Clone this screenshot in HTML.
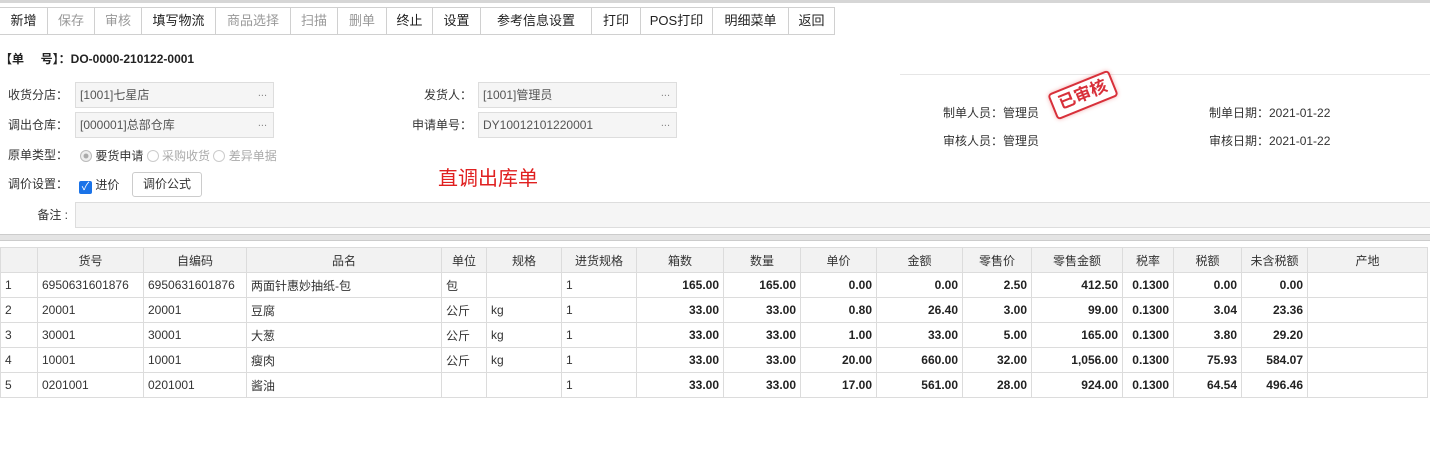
<!DOCTYPE html>
<html><head><meta charset="utf-8"><style>
*{box-sizing:border-box;margin:0;padding:0}
body{width:1430px;height:454px;background:#fff;font-family:"Liberation Sans","Noto Sans CJK SC",sans-serif;font-size:12px;color:#333;position:relative;overflow:hidden}
.a{position:absolute;white-space:nowrap}
.topline{position:absolute;left:0;top:0;width:1430px;height:3px;background:#d6d6d6}
.tb{position:absolute;left:0;top:7px;height:28px;display:flex;border:1px solid #d0d0d0;border-left:none}
.tb div{height:26px;line-height:26px;text-align:center;border-left:1px solid #d0d0d0;font-size:13px;color:#222}
.tb .d{color:#999}
.lbl{position:absolute;text-align:right;width:70px;line-height:26px}
.inp{position:absolute;height:26px;border:1px solid #ddd;background:#f5f5f5;line-height:24px;padding-left:4px;color:#555}
.inp span{position:absolute;right:6px;top:-2px;color:#888;font-size:11px}
table{position:absolute;left:0;top:247px;border-collapse:collapse;table-layout:fixed}
td,th{border:1px solid #dcdcdc;height:25px;padding:0 4px;white-space:nowrap;overflow:hidden;font-size:12px}
th{background:#f2f2f2;font-weight:normal;color:#333}
td.r{text-align:right;font-weight:bold;color:#222}
</style></head><body>
<div class="topline"></div>
<div class="tb">
<div style="width:47px;border-left:none">新增</div><div class="d" style="width:47px">保存</div><div class="d" style="width:47px">审核</div><div style="width:74px">填写物流</div><div class="d" style="width:75px">商品选择</div><div class="d" style="width:47px">扫描</div><div class="d" style="width:49px">删单</div><div style="width:46px">终止</div><div style="width:48px">设置</div><div style="width:111px">参考信息设置</div><div style="width:49px">打印</div><div style="width:72px">POS打印</div><div style="width:76px">明细菜单</div><div style="width:46px">返回</div>
</div>
<div class="a" style="left:0;top:50px;font-weight:bold;color:#222">【单&nbsp;&nbsp;&nbsp;&nbsp;&nbsp;号】：DO-0000-210122-0001</div>

<div class="lbl" style="left:-2px;top:82px">收货分店：</div>
<div class="inp" style="left:75px;top:82px;width:199px">[1001]七星店<span>...</span></div>
<div class="lbl" style="left:-2px;top:112px">调出仓库：</div>
<div class="inp" style="left:75px;top:112px;width:199px">[000001]总部仓库<span>...</span></div>
<div class="lbl" style="left:402px;top:82px">发货人：</div>
<div class="inp" style="left:478px;top:82px;width:199px">[1001]管理员<span>...</span></div>
<div class="lbl" style="left:402px;top:112px">申请单号：</div>
<div class="inp" style="left:478px;top:112px;width:199px">DY10012101220001<span>...</span></div>
<div class="lbl" style="left:-2px;top:142px">原单类型：</div>
<div class="a" style="left:80px;top:149px;line-height:14px"><span style="display:inline-block;width:12px;height:12px;border:1px solid #bbb;border-radius:50%;background:radial-gradient(#aaa 30%,#eee 40%);vertical-align:-2px"></span> 要货申请 <span style="display:inline-block;width:12px;height:12px;border:1px solid #ccc;border-radius:50%;vertical-align:-2px"></span> <span style="color:#aaa">采购收货</span> <span style="display:inline-block;width:12px;height:12px;border:1px solid #ccc;border-radius:50%;vertical-align:-2px"></span> <span style="color:#aaa">差异单据</span></div>
<div class="lbl" style="left:-2px;top:171px">调价设置：</div>
<div class="a" style="left:79px;top:176px"><span style="display:inline-block;width:13px;height:13px;background:#1a73e8;border-radius:2px;color:#fff;font-size:11px;line-height:13px;text-align:center;vertical-align:-1px">✓</span> 进价</div>
<div class="a" style="left:132px;top:172px;width:70px;height:25px;border:1px solid #ccc;border-radius:3px;text-align:center;line-height:23px">调价公式</div>
<div class="a" style="left:438px;top:162px;font-size:20px;color:#e02020">直调出库单</div>
<div class="lbl" style="left:-2px;top:202px">备注 :</div>
<div class="inp" style="left:75px;top:202px;width:1360px"></div>

<div class="a" style="left:900px;top:74px;width:530px;height:1px;background:#e6e6e6"></div>
<div class="a" style="left:943px;top:104px">制单人员：管理员</div>
<div class="a" style="left:943px;top:132px">审核人员：管理员</div>
<div class="a" style="left:1209px;top:104px">制单日期：2021-01-22</div>
<div class="a" style="left:1209px;top:132px">审核日期：2021-01-22</div>
<div class="a" style="left:1050px;top:81px;width:66px;height:28px;border:2px solid #d8303a;border-radius:4px;transform:rotate(-22deg);color:#d8303a;font-weight:bold;font-size:17px;line-height:24px;text-align:center;box-shadow:0 0 4px rgba(230,60,60,.4)">已审核</div>

<div class="a" style="left:0;top:234px;width:1430px;height:7px;background:#e4e4e4;border-top:1px solid #ccc;border-bottom:1px solid #ccc"></div>
<table>
<colgroup><col style="width:37px"><col style="width:106px"><col style="width:103px"><col style="width:195px"><col style="width:45px"><col style="width:75px"><col style="width:75px"><col style="width:87px"><col style="width:77px"><col style="width:76px"><col style="width:86px"><col style="width:69px"><col style="width:91px"><col style="width:51px"><col style="width:68px"><col style="width:66px"><col style="width:120px"></colgroup>
<tr><th></th><th>货号</th><th>自编码</th><th>品名</th><th>单位</th><th>规格</th><th>进货规格</th><th>箱数</th><th>数量</th><th>单价</th><th>金额</th><th>零售价</th><th>零售金额</th><th>税率</th><th>税额</th><th>未含税额</th><th>产地</th></tr>
<tr><td>1</td><td>6950631601876</td><td>6950631601876</td><td>两面针惠妙抽纸-包</td><td>包</td><td></td><td>1</td><td class="r">165.00</td><td class="r">165.00</td><td class="r">0.00</td><td class="r">0.00</td><td class="r">2.50</td><td class="r">412.50</td><td class="r">0.1300</td><td class="r">0.00</td><td class="r">0.00</td><td></td></tr>
<tr><td>2</td><td>20001</td><td>20001</td><td>豆腐</td><td>公斤</td><td>kg</td><td>1</td><td class="r">33.00</td><td class="r">33.00</td><td class="r">0.80</td><td class="r">26.40</td><td class="r">3.00</td><td class="r">99.00</td><td class="r">0.1300</td><td class="r">3.04</td><td class="r">23.36</td><td></td></tr>
<tr><td>3</td><td>30001</td><td>30001</td><td>大葱</td><td>公斤</td><td>kg</td><td>1</td><td class="r">33.00</td><td class="r">33.00</td><td class="r">1.00</td><td class="r">33.00</td><td class="r">5.00</td><td class="r">165.00</td><td class="r">0.1300</td><td class="r">3.80</td><td class="r">29.20</td><td></td></tr>
<tr><td>4</td><td>10001</td><td>10001</td><td>瘦肉</td><td>公斤</td><td>kg</td><td>1</td><td class="r">33.00</td><td class="r">33.00</td><td class="r">20.00</td><td class="r">660.00</td><td class="r">32.00</td><td class="r">1,056.00</td><td class="r">0.1300</td><td class="r">75.93</td><td class="r">584.07</td><td></td></tr>
<tr><td>5</td><td>0201001</td><td>0201001</td><td>酱油</td><td></td><td></td><td>1</td><td class="r">33.00</td><td class="r">33.00</td><td class="r">17.00</td><td class="r">561.00</td><td class="r">28.00</td><td class="r">924.00</td><td class="r">0.1300</td><td class="r">64.54</td><td class="r">496.46</td><td></td></tr>
</table>
</body></html>
